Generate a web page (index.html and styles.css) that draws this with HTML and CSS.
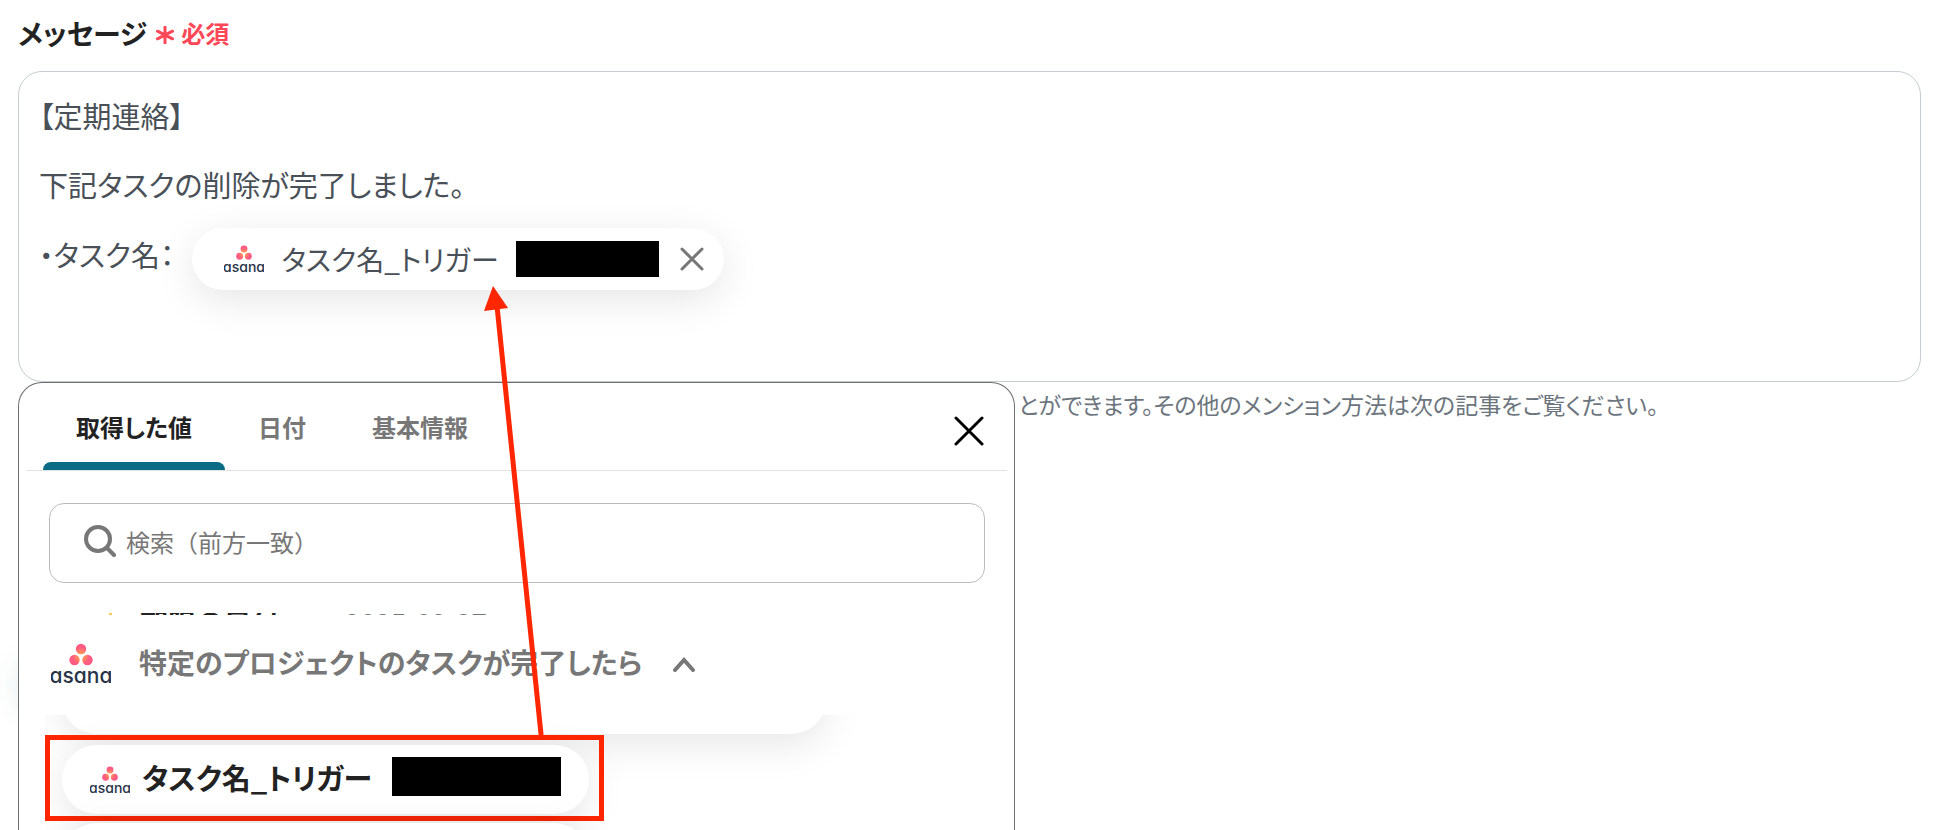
FILE: index.html
```html
<!DOCTYPE html>
<html lang="ja">
<head>
    <meta charset="UTF-8">
    <meta name="viewport" content="width=device-width, initial-scale=1.0">
    <title>メッセージ</title>
    <link rel="stylesheet" href="styles.css">
</head>
<body>
    <svg class="defs" width="0" height="0" aria-hidden="true">
        <defs>
            <radialGradient id="asanaDots" gradientUnits="userSpaceOnUse" cx="30" cy="13" r="13">
                <stop offset="0" stop-color="#ffb040"/>
                <stop offset="0.65" stop-color="#ff5c80"/>
                <stop offset="1" stop-color="#ff5a86"/>
            </radialGradient>
            <symbol id="asanaLogo" viewBox="0 0 60 42">
                <g fill="url(#asanaDots)">
                    <circle cx="30" cy="6" r="5.2"/>
                    <circle cx="23.5" cy="17" r="5.2"/>
                    <circle cx="36.5" cy="17" r="5.2"/>
                </g>
                <text class="logo-text" x="30" y="40" text-anchor="middle">asana</text>
            </symbol>
        </defs>
    </svg>

    <main class="page">
        <h1 class="label">メッセージ
            <span class="required">
                <svg class="asterisk" viewBox="0 0 18 18" aria-hidden="true"><path d="M9 1v16M1.5 5.2l15 7.6M16.5 5.2l-15 7.6"/></svg>
                必須
            </span>
        </h1>

        <section class="message">
            <p>【定期連絡】</p>
            <p>下記タスクの削除が完了しました。</p>
            <div class="message-row">
                <span>・タスク名：</span>
                <span class="chip">
                    <svg class="logo-small"><use href="#asanaLogo"/></svg>
                    <span>タスク名_トリガー</span>
                    <span class="mask"></span>
                    <button type="button" class="chip-close" aria-label="削除">
                        <svg viewBox="0 0 24 24"><path d="M2 2l20 20M22 2L2 22"/></svg>
                    </button>
                </span>
            </div>
        </section>

        <div class="below">
            <section class="picker">
                <div class="tabs">
                    <button type="button" class="tab active">取得した値</button>
                    <button type="button" class="tab">日付</button>
                    <button type="button" class="tab">基本情報</button>
                    <button type="button" class="close" aria-label="閉じる">
                        <svg viewBox="0 0 30 30"><path d="M2 2l26 26M28 2L2 28"/></svg>
                    </button>
                </div>
                <label class="search">
                    <svg viewBox="0 0 32 32" aria-hidden="true"><circle cx="14" cy="14" r="12"/><path d="M23 23l7 7"/></svg>
                    <input type="text" placeholder="検索（前方一致）" aria-label="検索">
                </label>
                <div class="results">
                    <!-- previous row, scrolled up under the edge of the list -->
                    <div class="clipped">
                        <i class="clipped-icon"></i>
                        <span class="clipped-name">期限の日付</span>
                        <span class="clipped-value">2025-09-27</span>
                    </div>
                    <button type="button" class="group">
                        <svg class="logo-large"><use href="#asanaLogo"/></svg>
                        <span class="group-name">特定のプロジェクトのタスクが完了したら</span>
                        <svg class="chevron" viewBox="0 0 22 16" aria-hidden="true"><path d="M2 14l9-10 9 10"/></svg>
                    </button>
                    <div class="list">
                        <div class="item item-top"></div>
                        <div class="highlight">
                            <button type="button" class="item">
                                <svg class="logo-small"><use href="#asanaLogo"/></svg>
                                <span class="item-name">タスク名_トリガー</span>
                                <span class="mask mask-large"></span>
                            </button>
                        </div>
                        <div class="item item-next"></div>
                    </div>
                </div>
            </section>
            <p class="help">とができます。その他のメンション方法は次の記事をご覧ください。</p>
        </div>

        <svg class="arrow" width="60" height="452" viewBox="0 0 60 452" aria-hidden="true">
            <path d="M13 20L57 448" stroke="#ff2600" stroke-width="5"/>
            <path d="M9 0L24 22L0 25z" fill="#ff2600"/>
        </svg>
    </main>
</body>
</html>
```
FILE: styles.css
```css
* {
    box-sizing: border-box;
}
body {
    margin: 0;
    background: #fff;
    color: #495057;
    font-family: "Noto Sans CJK JP", sans-serif;
    font-feature-settings: "palt";
    font-size: 28px;
}
button, input {
    font: inherit;
    font-feature-settings: inherit;
    color: inherit;
    background: none;
    border: none;
    padding: 0;
}
button {
    display: flex;
    align-items: center;
    cursor: pointer;
}
p {
    margin: 0;
}
svg {
    display: block;
    flex: none;
    fill: none;
    stroke-linecap: round;
}
.defs {
    position: absolute;
}
.page {
    position: relative;
    display: flex;
    flex-direction: column;
    height: 100vh;
    overflow: hidden;
    padding: 11px 35px 0 18px;
}
.label {
    display: flex;
    align-items: center;
    gap: 9px;
    margin: 0 0 16px;
    color: #222;
    font-size: 28px;
    font-weight: 700;
    line-height: 44px;
}
.required {
    display: flex;
    align-items: center;
    gap: 7px;
    color: #ff4757;
    font-size: 24px;
}
.asterisk {
    width: 18px;
    height: 18px;
    margin-top: 4px;
    stroke: #ff4757;
    stroke-width: 3;
}
.message {
    flex: none;
    height: 311px;
    padding: 9px 20px;
    border: 1px solid #c5ccd3;
    border-radius: 24px;
    font-size: 29px;
    line-height: 69px;
}
.message-row {
    display: flex;
    align-items: center;
    gap: 18px;
}
.chip {
    display: flex;
    align-items: center;
    gap: 17px;
    height: 62px;
    margin-top: 9px;
    padding: 0 20px 0 32px;
    border-radius: 31px;
    background: #fff;
    box-shadow: 0 10px 40px rgba(0, 0, 0, 0.1);
    font-size: 28px;
}
.mask {
    width: 143px;
    height: 36px;
    background: #000;
}
.mask-large {
    width: 169px;
    height: 39px;
    margin: 0 0 6px 8px;
}
.chip-close {
    margin-left: 4px;
}
.chip-close svg {
    width: 24px;
    height: 24px;
    stroke: #777;
    stroke-width: 3;
}
.logo-small {
    width: 40px;
    height: 28px;
}
.logo-large {
    width: 60px;
    height: 42px;
}
.logo-text {
    fill: #273347;
    font-family: Inter, sans-serif;
    font-feature-settings: "cv11";
    font-size: 21px;
    font-weight: 500;
}
.below {
    position: relative;
    flex: 1;
    display: flex;
    align-items: flex-start;
    gap: 3px;
    min-height: 0;
}
/* glow of the round button that sits behind the picker */
.below::before {
    content: "";
    position: absolute;
    left: 0;
    top: 274px;
    width: 60px;
    height: 60px;
    border-radius: 50%;
    box-shadow: 0 0 30px rgba(20, 90, 80, 0.12);
}
.picker {
    position: relative;
    flex: 0 0 52.4%;
    height: 100%;
    overflow: hidden;
    border: 1px solid #6e6e6e;
    border-bottom: none;
    border-radius: 24px 24px 0 0;
    background: #fff;
}
.help {
    color: #6c757d;
    font-size: 23px;
    line-height: 44px;
    white-space: nowrap;
}
.tabs {
    display: flex;
    height: 88px;
    margin: 0 7px;
    padding: 0 23px 0 17px;
    border-bottom: 1px solid #e2e2e2;
    color: #777;
    font-size: 24px;
    font-weight: 700;
}
.tab {
    padding: 8px 33px 0;
    border-bottom: 8px solid transparent;
}
.tab.active {
    position: relative;
    color: #222;
}
.tab.active::after {
    content: "";
    position: absolute;
    left: 0;
    right: 0;
    bottom: -8px;
    height: 8px;
    border-radius: 8px 8px 0 0;
    background: #0b6a84;
}
.close {
    margin-left: auto;
    padding-top: 8px;
}
.close svg {
    width: 30px;
    height: 30px;
    stroke: #000;
    stroke-width: 3;
}
.search {
    display: flex;
    align-items: center;
    gap: 10px;
    height: 80px;
    margin: 32px 29px 0 30px;
    padding: 0 34px 4px;
    border: 1px solid #bbb;
    border-radius: 15px;
}
.search svg {
    width: 32px;
    height: 32px;
    stroke: #777;
    stroke-width: 4;
}
.search input {
    flex: 1;
    outline: none;
    font-size: 24px;
    font-feature-settings: normal;
}
.search input::placeholder {
    color: #777;
    opacity: 1;
}
.results {
    margin-top: 30px;
    padding: 0 30px 0 26px;
}
.clipped {
    display: flex;
    align-items: flex-start;
    height: 2px;
    overflow: hidden;
    padding-left: 64px;
    font-weight: 700;
    line-height: 30px;
}
.clipped span {
    margin-top: -6px;
}
.clipped-icon {
    width: 3px;
    height: 2px;
    margin-right: 28px;
    background: #ffc95c;
}
.clipped-name {
    width: 205px;
    color: #222;
}
.clipped-value {
    color: #777;
    font-size: 26px;
}
.group {
    position: relative;
    gap: 28px;
    width: 100%;
    height: 100px;
    padding: 0 0 2px 6px;
    background: #fff;
    color: #777;
    font-weight: 700;
}
.group-name {
    margin-bottom: 5px;
}
.chevron {
    width: 22px;
    height: 16px;
    margin-left: 3px;
    stroke: #777;
    stroke-width: 4;
}
.list {
    height: 120px;
    overflow: hidden;
}
.item {
    gap: 12px;
    height: 69px;
    padding: 0 28px;
    border-radius: 35px;
    background: #fff;
    box-shadow: 0 10px 40px rgba(0, 0, 0, 0.1);
    color: #222;
    font-size: 29px;
    font-weight: 700;
}
.item-name {
    margin-bottom: 5px;
}
.item-top {
    width: 764px;
    margin: -50px 0 0 17px;
}
.highlight {
    width: 559px;
    margin-top: 1px;
    padding: 5px 10px 2px 12px;
    border: 5px solid #ff2600;
}
.highlight .item {
    width: 100%;
}
.item-next {
    width: 527px;
    margin: 2px 0 0 17px;
}
.arrow {
    position: absolute;
    left: 484px;
    top: 286px;
}
```
